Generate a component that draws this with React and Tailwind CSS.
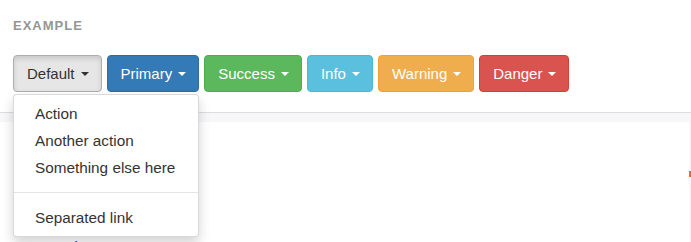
const buttons = [
  { label: 'Default', cls: 'bg-[#e6e6e6] border-[#adadad] text-[#333] shadow-[inset_0_3px_5px_rgba(0,0,0,0.125)]', caret: 'border-t-[#333]' },
  { label: 'Primary', cls: 'bg-[#337ab7] border-[#2e6da4] text-white', caret: 'border-t-white' },
  { label: 'Success', cls: 'bg-[#5cb85c] border-[#4cae4c] text-white', caret: 'border-t-white' },
  { label: 'Info', cls: 'bg-[#5bc0de] border-[#46b8da] text-white', caret: 'border-t-white' },
  { label: 'Warning', cls: 'bg-[#f0ad4e] border-[#eea236] text-white', caret: 'border-t-white' },
  { label: 'Danger', cls: 'bg-[#d9534f] border-[#d43f3a] text-white', caret: 'border-t-white' },
];

function DropdownMenu() {
  return (
    <ul className="absolute left-0 top-full mt-[2px] z-10 w-[186px] py-[5px] bg-white border border-black/15 rounded-[4px] shadow-[0_6px_12px_rgba(0,0,0,0.175)] text-[15.3px] leading-[21px] text-[#333]">
      <li className="px-[21px] py-[3px]">Action</li>
      <li className="px-[21px] py-[3px]">Another action</li>
      <li className="px-[21px] py-[3px]">Something else here</li>
      <li className="my-[11px] h-px bg-[#e5e5e5]" />
      <li className="px-[21px] py-[3px]">Separated link</li>
    </ul>
  );
}

export default function App() {
  return (
    <div className="w-[691px] h-[242px] overflow-hidden bg-white font-['Liberation_Sans',Arial,sans-serif]">
      <div className="px-[13px] pt-[17px]">
        <div className="text-[13px] leading-[18px] font-bold tracking-[1px] text-[#959595] uppercase">
          Example
        </div>
        <div className="mt-[20px] flex gap-[5px]">
          {buttons.map((b, i) => (
            <div key={b.label} className="relative">
              <button
                className={`flex items-center h-[37px] pl-[13px] pr-[12px] border rounded-[4px] text-[15px] leading-[21px] ${b.cls}`}
              >
                {b.label}
                <span className={`ml-[6px] w-0 h-0 border-t-[4.5px] border-x-[4.5px] border-x-transparent ${b.caret}`} />
              </button>
              {i === 0 && <DropdownMenu />}
            </div>
          ))}
        </div>
      </div>
      <div className="mt-[20px] border-t border-[#dddddd] bg-[#f7f7f9] pt-[9px] flex">
        <div className="flex-1 bg-white h-[120px] pl-[37px] pt-[114px] text-[15px] leading-[21px] text-[#333]">
          Dropdown
        </div>
        <div className="w-[2px] pt-[49px]">
          <div className="h-[6px] bg-[#f0643c]" />
        </div>
      </div>
    </div>
  );
}
